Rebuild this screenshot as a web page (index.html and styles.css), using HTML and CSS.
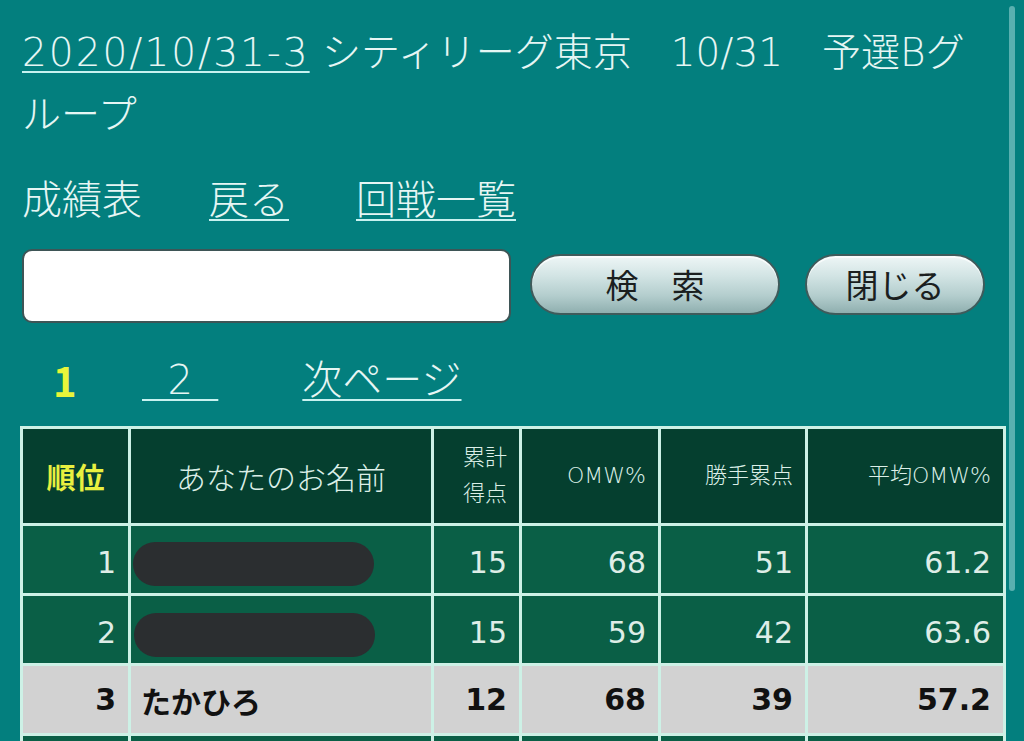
FILE: index.html
```html
<!DOCTYPE html>
<html lang="ja">
<head>
<meta charset="utf-8">
<title>成績表</title>
<link rel="stylesheet" href="styles.css">
</head>
<body>
<div class="page">
  <h1 class="title"><a href="#" class="link title-date">2020/10/31-3</a> シティリーグ東京　10/31　予選Bグループ</h1>
  <nav class="nav">
    <span>成績表</span>
    <a href="#" class="link">戻る</a>
    <a href="#" class="link">回戦一覧</a>
  </nav>
  <form class="search">
    <input class="search-input" type="text">
    <button type="button" class="btn btn-search">検　索</button>
    <button type="button" class="btn btn-close">閉じる</button>
  </form>
  <div class="pager">
    <span class="pager-current">1</span>
    <a href="#" class="link pager-num">&nbsp;&nbsp;2&nbsp;&nbsp;</a>
    <a href="#" class="link pager-next">次ページ</a>
  </div>
  <table class="standings">
    <colgroup>
      <col class="c-rank"><col class="c-name"><col class="c-pts"><col class="c-omw"><col class="c-kat"><col class="c-avg">
    </colgroup>
    <thead>
      <tr>
        <th class="h-rank">順位</th>
        <th class="h-name">あなたのお名前</th>
        <th class="h-small">累計<br>得点</th>
        <th class="h-small">OMW%</th>
        <th class="h-small">勝手累点</th>
        <th class="h-small">平均OMW%</th>
      </tr>
    </thead>
    <tbody>
      <tr class="row">
        <td class="num">1</td>
        <td class="name"><span class="redact redact-1"></span></td>
        <td class="num">15</td>
        <td class="num">68</td>
        <td class="num">51</td>
        <td class="num">61.2</td>
      </tr>
      <tr class="row">
        <td class="num">2</td>
        <td class="name"><span class="redact redact-2"></span></td>
        <td class="num">15</td>
        <td class="num">59</td>
        <td class="num">42</td>
        <td class="num">63.6</td>
      </tr>
      <tr class="row row-me">
        <td class="num">3</td>
        <td class="name">たかひろ</td>
        <td class="num">12</td>
        <td class="num">68</td>
        <td class="num">39</td>
        <td class="num">57.2</td>
      </tr>
      <tr class="row">
        <td class="num">4</td>
        <td class="name"></td>
        <td class="num">12</td>
        <td class="num">60</td>
        <td class="num">40</td>
        <td class="num">58.0</td>
      </tr>
    </tbody>
  </table>
</div>
<div class="scrollbar"></div>
</body>
</html>
```
FILE: styles.css
```css
html, body {
  margin: 0;
  padding: 0;
  height: 100%;
  overflow: hidden;
}
body {
  background: #037f7e;
  color: #e6f6f4;
  font-family: "DejaVu Sans", "Noto Sans CJK JP", sans-serif;
  font-weight: 300;
  position: relative;
}
.page {
  padding: 22px 0 0 22px;
}
.link {
  color: #e6f6f4;
  text-decoration: underline;
  text-decoration-color: #c8f2f0;
  text-decoration-thickness: 2px;
  text-underline-offset: 5px;
}
.title {
  margin: 0;
  width: 972px;
  font-size: 39px;
  font-weight: 300;
  line-height: 62px;
}
.title-date {
  letter-spacing: 2px;
}
.nav {
  margin-top: 29px;
  display: flex;
  gap: 67px;
  font-size: 40px;
  line-height: 50px;
}
.search {
  margin: 24px 0 0 0;
  display: flex;
  align-items: center;
}
.search-input {
  width: 489px;
  height: 74px;
  box-sizing: border-box;
  border: 2px solid #3e5556;
  border-radius: 10px;
  background: #fff;
  margin: 0;
}
.btn {
  height: 61px;
  box-sizing: border-box;
  border: 2px solid #3f5b5b;
  border-radius: 31px;
  background: linear-gradient(#eef6f6 0%, #d2e4e4 35%, #b3cdcd 70%, #8fafaf 100%);
  box-shadow: inset 0 2px 0 rgba(255,255,255,0.7);
  color: #1b1f1f;
  font-family: "Noto Sans CJK JP", sans-serif;
  font-weight: normal;
  font-size: 33px;
  line-height: 1;
  padding: 0;
  margin-bottom: 3px;
}
.btn-search {
  width: 250px;
  margin-left: 19px;
}
.btn-close {
  width: 180px;
  margin-left: 25px;
}
.pager {
  margin-top: 32px;
  display: flex;
  align-items: center;
  font-size: 40px;
  line-height: 50px;
}
.pager-current {
  color: #e8f53a;
  font-family: "Noto Sans CJK JP", sans-serif;
  font-weight: bold;
  margin-left: 31px;
  width: 89px;
}
.pager-next {
  margin-left: 84px;
}
.standings {
  margin: 21px 0 0 -2px;
  border-collapse: collapse;
  table-layout: fixed;
  width: 983px;
}
.c-rank { width: 108px; }
.c-name { width: 303px; }
.c-pts { width: 88px; }
.c-omw { width: 139px; }
.c-kat { width: 147px; }
.c-avg { width: 198px; }
.standings th,
.standings td {
  border: 3px solid #cdf1e6;
  padding: 0 12px 0 6px;
}
.standings thead th {
  background: #053f2f;
  height: 94px;
  color: #dcefe8;
  font-weight: 300;
}
.standings thead .h-rank {
  color: #e8f040;
  font-weight: bold;
  font-family: "Noto Sans CJK JP", sans-serif;
  font-size: 29px;
  text-align: center;
  padding: 0;
}
.standings thead .h-name {
  font-size: 30px;
  text-align: center;
  padding: 0;
}
.h-small {
  font-size: 22px;
  line-height: 36px;
  text-align: right;
}
.row td {
  background: #0a5f46;
  height: 67px;
  color: #deede7;
  font-size: 30px;
  font-weight: normal;
}
.standings .row td.num {
  padding-top: 5px;
  height: 62px;
}
.num {
  text-align: right;
}
.standings .name {
  padding-left: 2px;
}
.redact {
  display: block;
  width: 241px;
  height: 44px;
  border-radius: 22px;
  background: #2b2e30;
}
.redact-1 {
  margin-top: 8px;
}
.redact-2 {
  margin: 10px 0 0 1px;
}
.standings .row-me td {
  background: #d2d2d2;
  color: #111;
  font-weight: bold;
}
.standings .row-me td.num {
  padding-top: 0;
  height: 67px;
}
.standings .row-me .name {
  padding-left: 10px;
}
.scrollbar {
  position: absolute;
  top: 6px;
  right: 9px;
  width: 6px;
  height: 585px;
  border-radius: 3px;
  background: rgba(175, 225, 225, 0.5);
}
```
